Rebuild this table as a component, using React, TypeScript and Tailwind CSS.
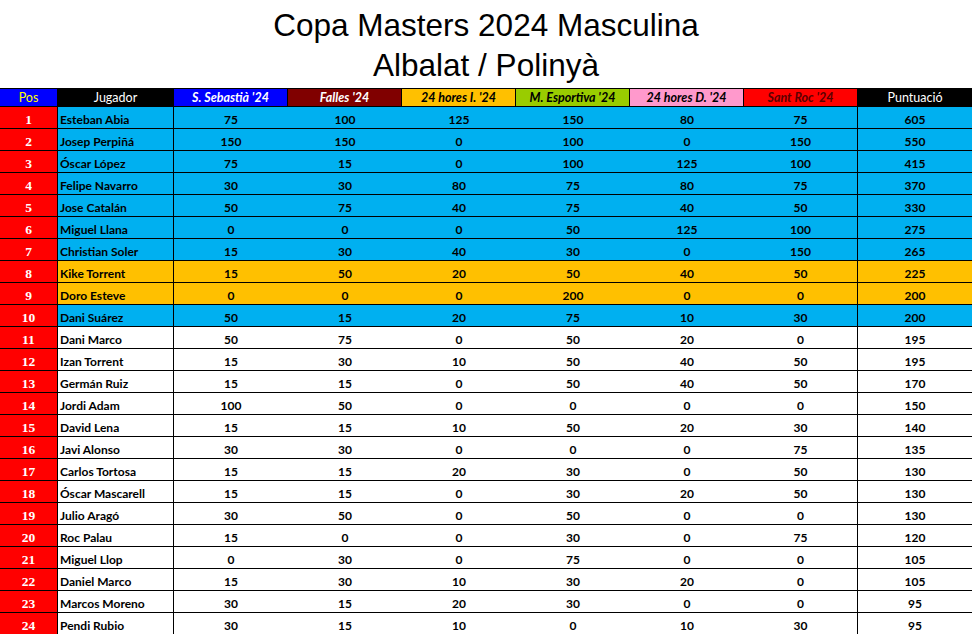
import React from "react";

type Row = [number, string, number, number, number, number, number, number, number, "b" | "o" | "w"];

const rows: Row[] = [
  [1, "Esteban Abia", 75, 100, 125, 150, 80, 75, 605, "b"],
  [2, "Josep Perpiñá", 150, 150, 0, 100, 0, 150, 550, "b"],
  [3, "Óscar López", 75, 15, 0, 100, 125, 100, 415, "b"],
  [4, "Felipe Navarro", 30, 30, 80, 75, 80, 75, 370, "b"],
  [5, "Jose Catalán", 50, 75, 40, 75, 40, 50, 330, "b"],
  [6, "Miguel Llana", 0, 0, 0, 50, 125, 100, 275, "b"],
  [7, "Christian Soler", 15, 30, 40, 30, 0, 150, 265, "b"],
  [8, "Kike Torrent", 15, 50, 20, 50, 40, 50, 225, "o"],
  [9, "Doro Esteve", 0, 0, 0, 200, 0, 0, 200, "o"],
  [10, "Dani Suárez", 50, 15, 20, 75, 10, 30, 200, "b"],
  [11, "Dani Marco", 50, 75, 0, 50, 20, 0, 195, "w"],
  [12, "Izan Torrent", 15, 30, 10, 50, 40, 50, 195, "w"],
  [13, "Germán Ruiz", 15, 15, 0, 50, 40, 50, 170, "w"],
  [14, "Jordi Adam", 100, 50, 0, 0, 0, 0, 150, "w"],
  [15, "David Lena", 15, 15, 10, 50, 20, 30, 140, "w"],
  [16, "Javi Alonso", 30, 30, 0, 0, 0, 75, 135, "w"],
  [17, "Carlos Tortosa", 15, 15, 20, 30, 0, 50, 130, "w"],
  [18, "Óscar Mascarell", 15, 15, 0, 30, 20, 50, 130, "w"],
  [19, "Julio Aragó", 30, 50, 0, 50, 0, 0, 130, "w"],
  [20, "Roc Palau", 15, 0, 0, 30, 0, 75, 120, "w"],
  [21, "Miguel Llop", 0, 30, 0, 75, 0, 0, 105, "w"],
  [22, "Daniel Marco", 15, 30, 10, 30, 20, 0, 105, "w"],
  [23, "Marcos Moreno", 30, 15, 20, 30, 0, 0, 95, "w"],
  [24, "Pendi Rubio", 30, 15, 10, 0, 10, 30, 95, "w"],
];

const bgFor = (c: "b" | "o" | "w") =>
  c === "b" ? "bg-[#00b0f0]" : c === "o" ? "bg-[#ffc000]" : "bg-white";

const sans = { fontFamily: "Lato, 'Open Sans', sans-serif" };
const serif = { fontFamily: "'Liberation Serif', serif" };

export default function App() {
  return (
    <div className="w-[972px] h-[634px] bg-white overflow-hidden">
      <div
        className="pt-[5px] pb-[3px] text-center text-[31.5px] leading-[40px] text-black"
        style={{ fontFamily: "'Liberation Sans', Arial, sans-serif" }}
      >
        <div>Copa Masters 2024 Masculina</div>
        <div>Albalat / Polinyà</div>
      </div>
      <div className="grid grid-cols-[58px_116px_repeat(7,114px)] border-t border-black" style={sans}>
        <div className="h-[18px] bg-[#0000ff] text-[#ffff00] text-[12.5px] leading-[17px] text-center border-r border-b border-black">Pos</div>
        <div className="h-[18px] bg-black text-white text-[12.5px] leading-[17px] text-center border-r border-b border-black">Jugador</div>
        <div className="h-[18px] bg-[#0000ff] text-white text-[12.5px] font-bold italic leading-[17px] text-center border-r border-b border-black">S. Sebastià '24</div>
        <div className="h-[18px] bg-[#800000] text-white text-[12.5px] font-bold italic leading-[17px] text-center border-r border-b border-black">Falles '24</div>
        <div className="h-[18px] bg-[#ffc000] text-black text-[12.5px] font-bold italic leading-[17px] text-center border-r border-b border-black">24 hores I. '24</div>
        <div className="h-[18px] bg-[#99cc00] text-black text-[12.5px] font-bold italic leading-[17px] text-center border-r border-b border-black">M. Esportiva '24</div>
        <div className="h-[18px] bg-[#ff99cc] text-black text-[12.5px] font-bold italic leading-[17px] text-center border-r border-b border-black">24 hores D. '24</div>
        <div className="h-[18px] bg-[#ff0000] text-[#5c0000] text-[12.5px] font-bold italic leading-[17px] text-center border-r border-b border-black">Sant Roc '24</div>
        <div className="h-[18px] bg-black text-white text-[12.5px] leading-[17px] text-center border-b border-black">Puntuació</div>
        {rows.map((r) => {
          const bg = bgFor(r[9]);
          return (
            <React.Fragment key={r[0]}>
              <div className="h-[22px] bg-[#ff0000] text-white text-[13.5px] font-bold leading-[25px] text-center border-r border-b border-black overflow-hidden" style={serif}>{r[0]}</div>
              <div className={`h-[22px] ${bg} text-black text-[12px] font-bold leading-[26px] pl-[2px] border-r border-b border-black whitespace-nowrap overflow-hidden`}>{r[1]}</div>
              {[r[2], r[3], r[4], r[5], r[6]].map((v, i) => (
                <div key={i} className={`h-[22px] ${bg} text-black text-[12px] font-bold leading-[26px] text-center border-b border-black overflow-hidden`}>{v}</div>
              ))}
              <div className={`h-[22px] ${bg} text-black text-[12px] font-bold leading-[26px] text-center border-r border-b border-black overflow-hidden`}>{r[7]}</div>
              <div className={`h-[22px] ${bg} text-black text-[12px] font-bold leading-[26px] text-center border-b border-black overflow-hidden`}>{r[8]}</div>
            </React.Fragment>
          );
        })}
      </div>
    </div>
  );
}
